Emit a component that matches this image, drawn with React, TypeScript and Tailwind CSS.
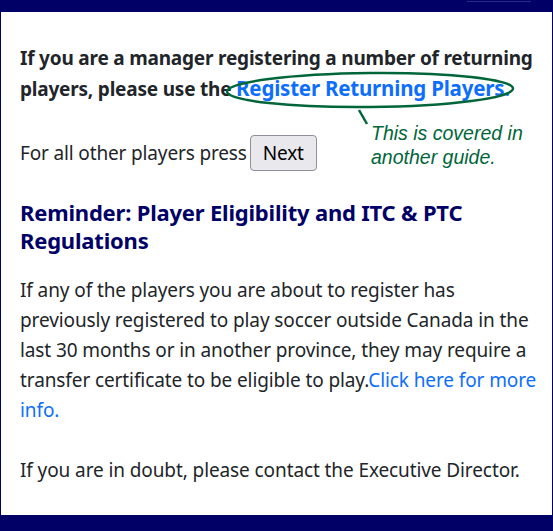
import React from 'react';

const bodyFont = { fontFamily: '"Noto Sans", "Open Sans", sans-serif' };

export default function App() {
  return (
    <div className="flex h-[531px] flex-col bg-[#000066] pt-[12px] pb-[16px] pl-px pr-px" style={bodyFont}>
      <div className="relative flex-1 bg-white pl-[19px] pr-[8px] pt-[31px] text-[#212529]">
        {/* top bar hint */}
        <div className="absolute -top-[11px] right-[21px] h-px w-[64px] bg-[#2a2a88]" />

        <p className="text-[19px] leading-[30px] font-bold tracking-[-0.2px]">
          If you are a manager registering a number of returning players, please use the{' '}
          <a href="#" className="text-[20.5px] text-[#0d6efd]">Register Returning Players.</a>
        </p>

        <div className="mt-[31px] flex items-center text-[19px] leading-[30px] tracking-[-0.15px]">
          <span>For all other players press</span>
          <button className="ml-[3px] h-[36px] w-[67px] rounded-[4px] border border-[#8f8f9d] bg-[#e9e9ed] text-[19px] text-black">
            Next
          </button>
        </div>

        <h3 className="mt-[27px] text-[22px] leading-[28px] font-bold text-[#000066] tracking-[-0.2px]">
          Reminder: Player Eligibility and ITC &amp; PTC Regulations
        </h3>

        <p className="mt-[21px] text-[19px] leading-[30px] tracking-[-0.1px]">
          If any of the players you are about to register has previously registered to play soccer outside Canada in
          the last 30 months or in another province, they may require a transfer certificate to be eligible to play.
          <a href="#" className="text-[#0d6efd]">Click here for more info.</a>
        </p>

        <p className="mt-[30px] text-[19px] leading-[30px] tracking-[-0.1px]">
          If you are in doubt, please contact the Executive Director.
        </p>

        {/* annotation overlay */}
        <svg className="pointer-events-none absolute left-0 top-0" width="551" height="200">
          <ellipse cx="369" cy="78" rx="143" ry="17" transform="rotate(-0.6 369 78)" fill="none" stroke="#00663a" strokeWidth="2.5" />
          <line x1="358" y1="98" x2="366" y2="112" stroke="#00663a" strokeWidth="2.5" />
        </svg>
        <div
          className="pointer-events-none absolute left-[370px] top-[109px] text-[19.5px] leading-[24px] italic text-[#00663a]"
          style={{ fontFamily: '"Liberation Sans", Arial, sans-serif' }}
        >
          This is covered in
          <br />
          another guide.
        </div>
      </div>
    </div>
  );
}
